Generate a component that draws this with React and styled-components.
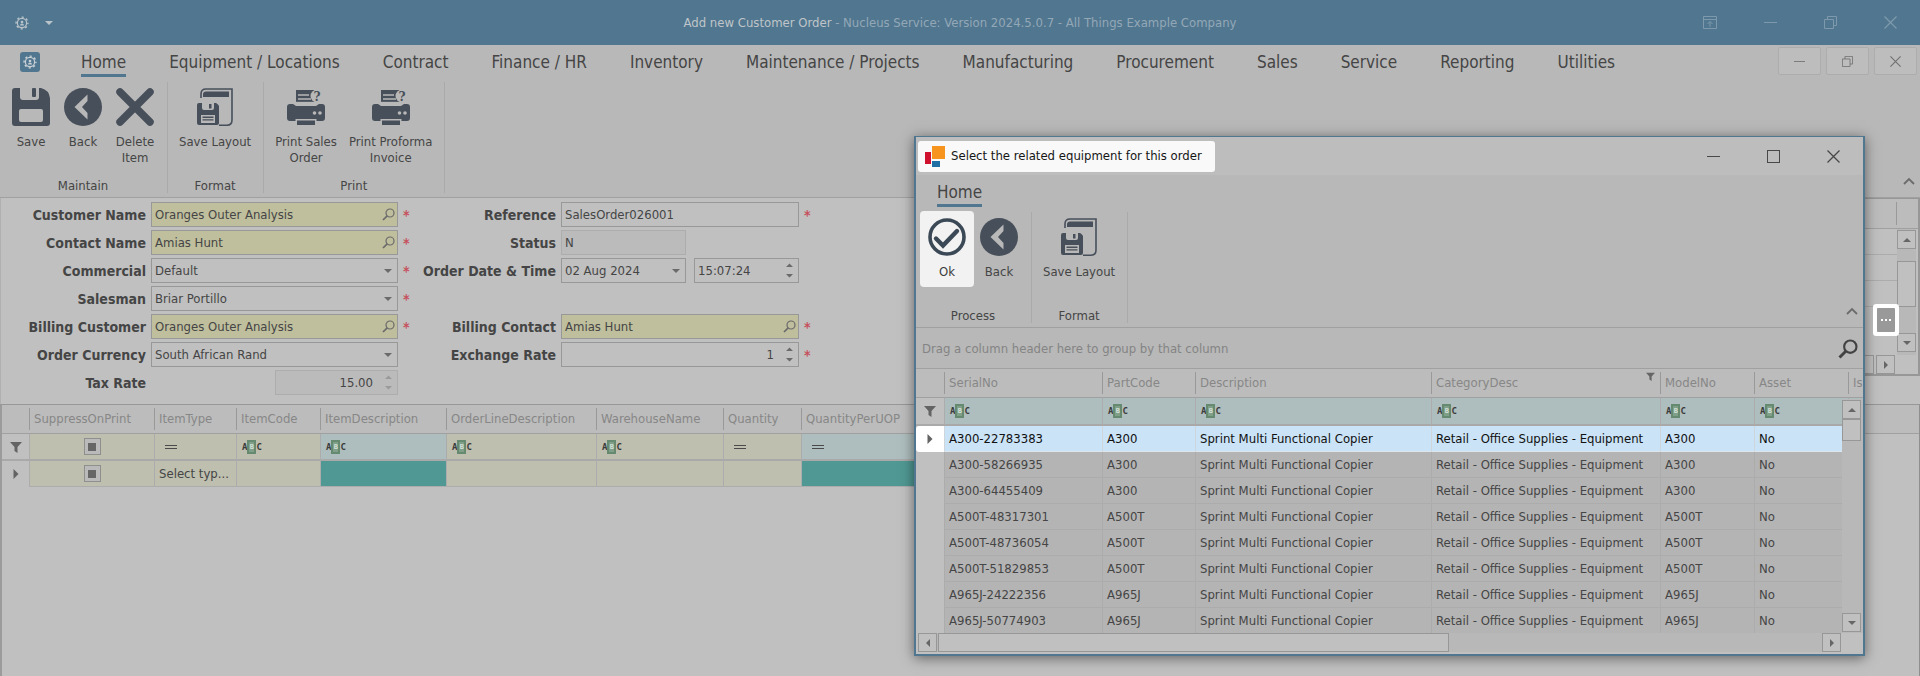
import React, { useState } from 'react';
import styled, { createGlobalStyle, css } from 'styled-components';

const colors = {
  accent: '#51768f',
  chrome: '#b8b8b8',
  panel: '#c0c0c0',
  header: '#bcbcbc',
  line: '#a0a0a0',
  softLine: '#acacac',
  text: '#454545',
  muted: '#878787',
  icon: '#474f5a',
  lookup: '#bfbe9d',
  beige: '#bebfaf',
  paleTeal: '#aebdbd',
  teal: '#509893',
};

const GlobalStyle = createGlobalStyle`
  * {
    box-sizing: border-box;
  }

  body {
    margin: 0;
    background: ${colors.panel};
    color: ${colors.text};
    font-family: "DejaVu Sans Condensed", Tahoma, "DejaVu Sans", sans-serif;
    font-size: 13px;
    line-height: 16px;
  }

  button, input, select {
    font: inherit;
    color: inherit;
    margin: 0;
    padding: 0;
    border: 0;
    background: none;
  }

  svg {
    display: block;
    flex: none;
  }
`;

/* ---------- window ---------- */

const Window = styled.div`
  position: relative;
  display: flex;
  flex-direction: column;
  min-height: 100vh;
  overflow: hidden;
`;

const TitleBar = styled.header`
  display: grid;
  grid-template-columns: 1fr auto 1fr;
  align-items: center;
  height: 45px;
  background: ${colors.accent};
  color: #93a8b7;
`;

const TitleText = styled.h1`
  margin: 0;
  font-size: 13px;
  font-weight: 400;
  white-space: nowrap;

  b {
    font-weight: 400;
    color: #bfc5c9;
  }
`;

const QuickAccess = styled.div`
  display: flex;
  align-items: center;
  gap: 16px;
  padding-left: 15px;
  color: #b9c3ca;
`;

const WindowButtons = styled.div`
  display: flex;
  justify-content: flex-end;
  color: ${({ $color }) => $color};
`;

const WindowButton = styled.button`
  display: flex;
  align-items: center;
  justify-content: center;
  width: 60px;
  height: 36px;
`;

const MdiButtons = styled.div`
  display: flex;
  align-self: flex-start;
  gap: 5px;
  margin: 2px 3px 0 auto;
`;

const MdiButton = styled.button`
  display: flex;
  align-items: center;
  justify-content: center;
  width: 43px;
  height: 28px;
  border: 1px solid #adadad;
  border-radius: 2px;
  background: #bdbdbd;
  color: #707070;
`;

/* ---------- ribbon ---------- */

const Ribbon = styled.div`
  background: ${colors.chrome};
  border-bottom: 1px solid ${colors.line};
`;

const TabRow = styled.nav`
  display: flex;
  align-items: flex-start;
  height: 37px;
`;

const AppBadge = styled.button`
  display: flex;
  align-items: center;
  justify-content: center;
  width: 20px;
  height: 20px;
  margin: 7px 20px 0 20px;
  border-radius: 3px;
  background: ${colors.accent};
  color: #c8d0d6;
`;

const Tab = styled.button`
  height: 32px;
  margin: 0 22px 0 21px;
  padding-top: 4px;
  border-bottom: 3px solid ${({ $active }) => ($active ? colors.accent : 'transparent')};
  font-size: 17px;
  line-height: 24px;
  white-space: nowrap;
`;

const RibbonBody = styled.div`
  display: flex;
  align-items: flex-start;
  padding-bottom: 4px;
`;

const RibbonGroup = styled.section`
  display: flex;
  flex-direction: column;
  justify-content: space-between;
  height: 111px;
  padding: 0 6px 0 5px;
  border-right: 1px solid #aaaaaa;
`;

const GroupButtons = styled.div`
  display: flex;
`;

const GroupName = styled.div`
  line-height: 14px;
  text-align: center;
`;

const RibbonButton = styled.button`
  display: flex;
  flex-direction: column;
  align-items: center;
  gap: 8px;
  min-width: 52px;
  height: 74px;
  padding: 6px 6px 0;
  color: ${colors.text};
  line-height: 16px;
  text-align: center;
  white-space: pre-line;

  ${({ $spot }) =>
    $spot &&
    css`
      border-radius: 3px;
      background: #f2f2f2;
      box-shadow: 0 0 0 1px #f2f2f2;
      color: #3c3c3c;
    `}
`;

const Collapse = styled.button`
  align-self: flex-end;
  margin: 0 5px 3px auto;
  padding: 5px 0;
  color: #6c6c6c;
`;

/* ---------- order form ---------- */

const FormArea = styled.form`
  display: flex;
  background: ${colors.panel};
  border-left: 1px solid #b0b0b0;
`;

const FieldGrid = styled.div`
  display: grid;
  grid-template-columns: ${({ $label }) => $label}px ${({ $field }) => $field}px 10px;
  grid-auto-rows: 25px;
  align-items: center;
  gap: 3px 5px;
  padding: 4px 0 9px;
`;

const FieldLabel = styled.label`
  font-size: 14px;
  font-weight: 700;
  text-align: right;
  white-space: nowrap;
`;

const FieldRow = styled.div`
  display: flex;
  justify-content: ${({ $end }) => ($end ? 'flex-end' : 'flex-start')};
  gap: 8px;
`;

const Star = styled.span`
  color: #c6505c;
  font-size: 14px;
  font-weight: 700;
`;

const Box = styled.div`
  display: flex;
  align-items: center;
  flex: ${({ $width }) => ($width ? `0 0 ${$width}px` : '1')};
  min-width: 0;
  height: 25px;
  padding: 0 ${({ $lookup }) => ($lookup ? 2 : 5)}px 0 3px;
  border: 1px solid ${({ $off }) => ($off ? '#adadad' : '#989898')};
  background: ${({ $lookup, $off }) => ($lookup ? colors.lookup : $off ? '#bbbbbb' : colors.panel)};
  color: ${({ $off }) => ($off ? '#9a9a9a' : '#6a6a6a')};
`;

const controlStyle = css`
  flex: 1;
  min-width: 0;
  height: 23px;
  outline: 0;
  color: ${colors.text};
  text-align: ${({ $right }) => ($right ? 'right' : 'left')};
`;

const Input = styled.input`
  ${controlStyle}
  padding-right: ${({ $right }) => ($right ? 12 : 0)}px;
`;

const Select = styled.select`
  appearance: none;
  ${controlStyle}
`;

/* ---------- grids ---------- */

const Table = styled.table`
  width: ${({ $width }) => $width};
  table-layout: fixed;
  border-collapse: separate;
  border-spacing: 0;
`;

const HeadCell = styled.th`
  height: 29px;
  padding: 0;
  border-bottom: 1px solid ${colors.line};
  background: ${colors.header};
  color: ${colors.muted};
  font-weight: 400;
  text-align: left;
`;

const HeadLabel = styled.div`
  display: flex;
  justify-content: space-between;
  height: 22px;
  padding: 0 5px 0 4px;
  border-left: 1px solid #999999;
  line-height: 22px;
  white-space: nowrap;

  svg {
    color: #666666;
  }
`;

const Cell = styled.td`
  height: 26px;
  padding: 0 0 0 ${({ $pad = 4 }) => $pad}px;
  border-left: 1px solid ${colors.softLine};
  border-bottom: 1px solid ${colors.softLine};
  background: ${({ $bg }) => $bg || '#b4b4b4'};
  text-align: left;
  overflow: hidden;
  white-space: nowrap;
`;

const FilterCell = styled(Cell)`
  height: ${({ $tall }) => ($tall ? 28 : 27)}px;
  border-bottom: 2px solid #a9a9a9;
`;

const MarkerCell = styled.td`
  padding: 0;
  border-bottom: ${({ $line }) => ($line ? '2px solid #a9a9a9' : '0')};
  background: ${colors.panel};
  color: #636363;

  svg {
    margin: 0 auto;
  }
`;

const SelectedRow = styled.tr`
  color: #111111;

  td {
    background: #cae3f6;
    border-left-color: #cfd6db;
    border-bottom-color: #dde6ec;
  }

  td:first-child {
    background: #ffffff;
    border-radius: 3px 0 0 3px;
  }
`;

const Check = styled.input`
  appearance: none;
  display: block;
  width: 17px;
  height: 17px;
  margin: 0 auto;
  border: 1px solid #8f8f8f;
  background: linear-gradient(#666666, #666666) center / 8px 8px no-repeat, #bababa;
`;

const AbcMark = styled.span`
  display: flex;
  align-items: center;
  width: 20px;
  color: #3c3c3c;
  font: 700 9px/14px "DejaVu Sans Mono", monospace;

  i {
    display: flex;
    justify-content: center;
    width: 9px;
    height: 14px;
    border: 2px solid #668a70;
    background: #7f9f88;
    color: #d5e0d8;
    font-style: normal;
    font-size: 7px;
    line-height: 10px;
  }
`;

const LinesGrid = styled.section`
  flex: 1;
  border-top: 1px solid #979797;
  border-left: 2px solid #9b9b9b;
  border-right: 1px solid #8f8f8f;
  background: ${colors.panel};
`;

const LinesHead = styled.div`
  background: linear-gradient(${colors.header} 28px, ${colors.line} 28px, ${colors.line} 29px, transparent 29px);
`;

/* ---------- scroll bars ---------- */

const ScrollTrack = styled.div`
  display: flex;
  flex-direction: ${({ $vertical }) => ($vertical ? 'column' : 'row')};
  gap: ${({ $gap = 0 }) => $gap}px;
  background: ${({ $bg = '#b8b8b8' }) => $bg};
`;

const ScrollButton = styled.button`
  display: flex;
  align-items: center;
  justify-content: center;
  flex: none;
  width: 19px;
  height: 19px;
  border: 1px solid #979797;
  background: ${colors.panel};
  color: #666666;
`;

const Thumb = styled.div`
  flex: 0 0 ${({ $size }) => $size};
  border: 1px solid #979797;
  background: ${colors.panel};
`;

const Spacer = styled.div`
  flex: ${({ $size }) => ($size ? `0 0 ${$size}px` : '1')};
`;

/* ---------- side list, mostly behind the dialog ---------- */

const SideList = styled.div`
  display: flex;
  flex-direction: column;
  flex: 1;
  align-self: flex-start;
  height: 178px;
  margin-left: 186px;
  border: 1px solid #979797;
  border-width: 1px 2px 2px 1px;
`;

const SideHead = styled.div`
  display: flex;
  justify-content: flex-end;
  flex: 0 0 30px;
  padding: 3px 21px 3px 0;
  border-bottom: 1px solid ${colors.line};
  background: ${colors.header};

  &::after {
    content: '';
    border-right: 1px solid #999999;
  }
`;

const SideBody = styled.div`
  display: flex;
  flex: 1;
  padding-right: 2px;
`;

const SideRows = styled.div`
  flex: 1;
`;

const SideRow = styled.div`
  display: flex;
  justify-content: flex-end;
  height: 26px;
  padding: 1px 2px 0 0;
  border-bottom: 1px solid ${({ $last }) => ($last ? 'transparent' : colors.softLine)};
`;

const DotsButton = styled.button`
  position: relative;
  z-index: 1;
  display: flex;
  align-items: center;
  justify-content: center;
  gap: 2px;
  width: 18px;
  height: 24px;
  background: #999999;
  box-shadow: 0 0 0 4px #ffffff;
  border-radius: 1px;

  i {
    width: 2px;
    height: 2px;
    background: #ffffff;
  }
`;

/* ---------- dialog ---------- */

const Dialog = styled.div`
  position: absolute;
  top: 136px;
  right: 55px;
  width: 951px;
  border: 2px solid ${colors.accent};
  border-width: 1px 2px 2px 2px;
  background: ${colors.chrome};
  box-shadow: 0 2px 12px rgba(0, 0, 0, 0.5);
`;

const DialogTitleBar = styled.header`
  display: flex;
  align-items: center;
  height: 38px;
  background: #bdbdbd;
`;

const DialogTitle = styled.h2`
  display: flex;
  align-items: center;
  gap: 5px;
  height: 31px;
  margin: 0 auto 0 2px;
  padding: 0 13px 0 7px;
  border-radius: 3px;
  background: #f9f9f9;
  color: #161616;
  font-size: 13px;
  font-weight: 400;
`;

const GroupPanel = styled.div`
  display: flex;
  align-items: center;
  justify-content: space-between;
  height: 41px;
  padding: 2px 5px 0 6px;
  border-bottom: 1px solid ${colors.line};
  color: #848484;
`;

const SearchButton = styled.button`
  color: #424242;
`;

const DialogGrid = styled.div`
  position: relative;
  height: 264px;
  overflow: hidden;
`;

const GridScroll = styled.div`
  position: absolute;
  top: 30px;
  right: 0;
  bottom: 0;
  display: flex;
  width: 21px;
  padding: 1px 2px 1px 0;
  background: ${colors.chrome};
`;

const DialogFooter = styled.div`
  display: flex;
  align-items: center;
  padding: 0 0 2px 2px;
  background: ${colors.panel};
`;

const FooterTrack = styled(ScrollTrack)`
  flex: 1;
  margin-right: 22px;
`;

/* ---------- icons ---------- */

const GearIcon = () => (
  <svg width="14" height="14" viewBox="0 0 14 14" fill="none" stroke="currentColor">
    <circle cx="7" cy="7" r="4.6" strokeWidth="1.2" />
    <circle cx="7" cy="7" r="5.9" strokeWidth="1.4" strokeDasharray="2.2 2.434" strokeDashoffset="1.1" />
    <circle cx="7" cy="6" r="1.300" fill="currentColor" stroke="none" />
    <path d="M5 9.500Q5 7.500 7 7.500Q9 7.500 9 9.500Z" fill="currentColor" stroke="none" />
  </svg>
);

const SaveIcon = () => (
  <svg width="38" height="38" viewBox="0 0 38 38" fill={colors.icon}>
    <path
      fillRule="evenodd"
      d="M3 0H8V9Q8 12 11 12H24Q27 12 27 9V0H29Q37 2 38 10V35Q38 38 35 38H3Q0 38 0 35V3Q0 0 3 0ZM9 21Q7 21 7 23V32Q7 34 9 34H29Q31 34 31 32V23Q31 21 29 21Z"
    />
    <rect x="20" y="0" width="4" height="9" rx="1" />
  </svg>
);

const BackIcon = () => (
  <svg width="38" height="38" viewBox="0 0 38 38">
    <circle cx="19" cy="19" r="19" fill={colors.icon} />
    <path d="M23.5 6.5L10.5 19L23.5 31.5V25L18 19L23.5 13Z" fill={colors.chrome} />
  </svg>
);

const DeleteIcon = () => (
  <svg width="38" height="38" viewBox="0 0 38 38">
    <path d="M4 4L34 34M34 4L4 34" stroke={colors.icon} strokeWidth="7.500" strokeLinecap="round" />
  </svg>
);

const LayoutIcon = () => (
  <svg width="38" height="38" viewBox="0 0 38 38" fill={colors.icon}>
    <path d="M5 10V6Q5 1 10 1H36V32Q36 37.2 31 37.2H23" fill="none" stroke={colors.icon} strokeWidth="1.6" />
    <path d="M10 3.5H33V9H7V6.500Q7 3.500 10 3.500Z" />
    <path
      fillRule="evenodd"
      d="M3 15H6V20Q6 22 8 22H16Q18 22 18 20V15H20Q22 16 23 18V35Q23 37 21 37H3Q1 37 1 35V17Q1 15 3 15ZM5 27V35H19V27Z"
    />
    <path d="M13 16H15.500V20.500H13ZM6.500 28.500H17.500V30H6.500ZM6.500 31.300H17.500V32.600H6.500Z" />
  </svg>
);

const PrintIcon = () => (
  <svg width="38" height="38" viewBox="0 0 38 38" fill={colors.icon}>
    <path d="M9 2H30V15H9Z" />
    <path d="M11 7H22M11 11H24" stroke={colors.chrome} strokeWidth="1.3" />
    <path d="M8 14.500H30" stroke={colors.chrome} strokeWidth="1.3" />
    <path d="M3 16H6L9 18H29L32 16H35Q38 16 38 19V30Q38 33 35 33H3Q0 33 0 30V19Q0 16 3 16Z" />
    <circle cx="30" cy="8" r="6.500" fill={colors.chrome} />
    <circle cx="27.500" cy="25" r="1.800" fill={colors.chrome} />
    <circle cx="33" cy="25" r="1.800" fill={colors.chrome} />
    <path d="M8.500 31H29.500V36H8.500Z" fill={colors.chrome} />
    <rect x="10" y="32.500" width="18" height="4.500" />
    <text x="30" y="13" textAnchor="middle" fontFamily="DejaVu Serif" fontSize="12" fontWeight="700">
      ?
    </text>
  </svg>
);

const OkIcon = () => (
  <svg width="38" height="38" viewBox="0 0 38 38" fill="none" stroke="#3b4856">
    <circle cx="19" cy="19" r="17" strokeWidth="3.600" />
    <path d="M8 20.500L15 27.500L29 13" strokeWidth="4.400" strokeLinecap="round" />
  </svg>
);

const CompanyIcon = () => (
  <svg width="21" height="21" viewBox="0 0 21 21">
    <rect x="0" y="6" width="6" height="12" fill="#d0112e" />
    <rect x="7" y="0" width="13" height="13" fill="#f7941e" />
    <rect x="7" y="15" width="8" height="6" fill="#1f6fa5" />
  </svg>
);

const MinimizeIcon = ({ size = 13 }) => (
  <svg width={size} height={size} viewBox="0 0 13 13">
    <path d="M0 6.500H13" stroke="currentColor" strokeWidth="1" />
  </svg>
);

const MaximizeIcon = () => (
  <svg width="13" height="13" viewBox="0 0 13 13">
    <rect x="0.500" y="0.500" width="12" height="12" fill="none" stroke="currentColor" />
  </svg>
);

const RestoreIcon = ({ size = 13 }) => (
  <svg width={size} height={size} viewBox="0 0 13 13" fill="none" stroke="currentColor">
    <path d="M0.500 3.500H9.500V12.500H0.500ZM3.500 3.500V0.500H12.500V9.500H9.500" />
  </svg>
);

const CloseIcon = ({ size = 13 }) => (
  <svg width={size} height={size} viewBox="0 0 13 13">
    <path d="M0.500 0.500L12.500 12.500M12.500 0.500L0.500 12.500" stroke="currentColor" strokeWidth="1.300" />
  </svg>
);

const RibbonToggleIcon = () => (
  <svg width="14" height="13" viewBox="0 0 14 13" fill="none" stroke="currentColor">
    <path d="M0.500 0.500H13.500V12.500H0.500ZM0.500 3.500H13.500M7 11V5.500M4.500 8L7 5.500L9.500 8" />
  </svg>
);

const ChevronUp = () => (
  <svg width="12" height="8" viewBox="0 0 12 8">
    <path d="M1 7L6 2L11 7" fill="none" stroke="currentColor" strokeWidth="1.800" />
  </svg>
);

const MagnifierIcon = ({ size = 13, weight = 1.2 }) => (
  <svg width={size} height={size} viewBox="0 0 13 13" fill="none" stroke="currentColor">
    <circle cx="8" cy="5" r="4" strokeWidth={weight} />
    <path d="M5.200 7.800L1 12" strokeWidth={weight * 1.4} />
  </svg>
);

const FunnelIcon = ({ size = 12 }) => (
  <svg width={size} height={size} viewBox="0 0 12 12">
    <path d="M0 1H12L7.500 6V12L4.500 10V6Z" fill="currentColor" />
  </svg>
);

const EqualsIcon = () => (
  <svg width="12" height="6" viewBox="0 0 12 6">
    <path d="M0 1.500H12M0 4.500H12" stroke="#4a4a4a" strokeWidth="1.200" />
  </svg>
);

const triangles = {
  up: 'M0 6L4 2L8 6Z',
  down: 'M0 2L4 6L8 2Z',
  left: 'M6 0L2 4L6 8Z',
  right: 'M2 0L6 4L2 8Z',
};

const Triangle = ({ dir, size = 8 }) => (
  <svg width={size} height={size} viewBox="0 0 8 8">
    <path d={triangles[dir]} fill="currentColor" />
  </svg>
);

const SpinIcon = () => (
  <svg width="7" height="15" viewBox="0 0 7 15" fill="currentColor">
    <path d="M0 4L3.500 0.500L7 4ZM0 11L3.500 14.500L7 11Z" />
  </svg>
);

/* ---------- data ---------- */

const tabs = [
  'Home',
  'Equipment / Locations',
  'Contract',
  'Finance / HR',
  'Inventory',
  'Maintenance / Projects',
  'Manufacturing',
  'Procurement',
  'Sales',
  'Service',
  'Reporting',
  'Utilities',
];

const mainGroups = [
  {
    name: 'Maintain',
    buttons: [
      { label: 'Save', Icon: SaveIcon },
      { label: 'Back', Icon: BackIcon },
      { label: 'Delete\nItem', Icon: DeleteIcon },
    ],
  },
  { name: 'Format', buttons: [{ label: 'Save Layout', Icon: LayoutIcon }] },
  {
    name: 'Print',
    buttons: [
      { label: 'Print Sales\nOrder', Icon: PrintIcon },
      { label: 'Print Proforma\nInvoice', Icon: PrintIcon },
    ],
  },
];

const dialogGroups = [
  {
    name: 'Process',
    buttons: [
      { label: 'Ok', Icon: OkIcon, spot: true },
      { label: 'Back', Icon: BackIcon },
    ],
  },
  { name: 'Format', buttons: [{ label: 'Save Layout', Icon: LayoutIcon }] },
];

const leftFields = [
  { id: 'customer', label: 'Customer Name', type: 'lookup', value: 'Oranges Outer Analysis', required: true },
  { id: 'contact', label: 'Contact Name', type: 'lookup', value: 'Amias Hunt', required: true },
  { id: 'commercial', label: 'Commercial', type: 'select', value: 'Default', required: true },
  { id: 'salesman', label: 'Salesman', type: 'select', value: 'Briar Portillo', required: true },
  { id: 'billing', label: 'Billing Customer', type: 'lookup', value: 'Oranges Outer Analysis', required: true },
  { id: 'currency', label: 'Order Currency', type: 'select', value: 'South African Rand' },
  { id: 'tax', label: 'Tax Rate', type: 'spin', value: '15.00', width: 123, right: true, off: true },
];

const rightFields = [
  { id: 'reference', label: 'Reference', type: 'text', value: 'SalesOrder026001', required: true },
  { id: 'status', label: 'Status', type: 'text', value: 'N', width: 125, off: true },
  { id: 'date', label: 'Order Date & Time', type: 'select', value: '02 Aug 2024', width: 125, time: '15:07:24' },
  { id: 'blank' },
  { id: 'billingContact', label: 'Billing Contact', type: 'lookup', value: 'Amias Hunt', required: true },
  { id: 'rate', label: 'Exchange Rate', type: 'spin', value: '1', right: true, required: true },
];

const lineColumns = [
  { name: 'SuppressOnPrint', width: 125, filter: 'check' },
  { name: 'ItemType', width: 82, filter: 'equals' },
  { name: 'ItemCode', width: 84, filter: 'abc' },
  { name: 'ItemDescription', width: 126, filter: 'abc', locked: true },
  { name: 'OrderLineDescription', width: 150, filter: 'abc' },
  { name: 'WarehouseName', width: 127, filter: 'abc' },
  { name: 'Quantity', width: 78, filter: 'equals' },
  { name: 'QuantityPerUOP', width: 131, filter: 'equals', locked: true },
];

const pickColumns = [
  { name: 'SerialNo', width: 158 },
  { name: 'PartCode', width: 93 },
  { name: 'Description', width: 236 },
  { name: 'CategoryDesc', width: 229, filtered: true },
  { name: 'ModelNo', width: 94 },
  { name: 'Asset', width: 94 },
  { name: 'Is' },
];

const serials = [
  ['A300-22783383', 'A300'],
  ['A300-58266935', 'A300'],
  ['A300-64455409', 'A300'],
  ['A500T-48317301', 'A500T'],
  ['A500T-48736054', 'A500T'],
  ['A500T-51829853', 'A500T'],
  ['A965J-24222356', 'A965J'],
  ['A965J-50774903', 'A965J'],
];

/* ---------- components ---------- */

const RibbonGroups = ({ groups }) => (
  <RibbonBody>
    {groups.map((group) => (
      <RibbonGroup key={group.name}>
        <GroupButtons>
          {group.buttons.map(({ label, Icon, spot }) => (
            <RibbonButton key={label} type="button" $spot={spot}>
              <Icon />
              {label}
            </RibbonButton>
          ))}
        </GroupButtons>
        <GroupName>{group.name}</GroupName>
      </RibbonGroup>
    ))}
    <Collapse type="button" aria-label="Collapse ribbon">
      <ChevronUp />
    </Collapse>
  </RibbonBody>
);

const Control = ({ id, type, value, width, right, off }) => (
  <Box $width={width} $lookup={type === 'lookup'} $off={off}>
    {type === 'select' ? (
      <Select id={id} defaultValue={value}>
        <option>{value}</option>
      </Select>
    ) : (
      <Input id={id} type="text" defaultValue={value} readOnly={off} $right={right} />
    )}
    {type === 'lookup' && <MagnifierIcon />}
    {type === 'select' && <Triangle dir="down" size={8} />}
    {type === 'spin' && <SpinIcon />}
  </Box>
);

const Fields = ({ fields, label, field }) => (
  <FieldGrid $label={label} $field={field}>
    {fields.map((f) =>
      f.label ? (
        <React.Fragment key={f.id}>
          <FieldLabel htmlFor={f.id}>{f.label}</FieldLabel>
          <FieldRow $end={f.right}>
            <Control {...f} />
            {f.time && <Control id="time" type="spin" value={f.time} />}
          </FieldRow>
          <Star>{f.required ? '*' : ''}</Star>
        </React.Fragment>
      ) : (
        <React.Fragment key={f.id}>
          <span />
          <span />
          <span />
        </React.Fragment>
      )
    )}
  </FieldGrid>
);

const Abc = () => (
  <AbcMark>
    A<i>B</i>C
  </AbcMark>
);

const OrderLines = () => (
  <LinesGrid>
    <LinesHead>
      <Table $width="930px">
        <colgroup>
          <col width="27" />
          {lineColumns.map((c) => (
            <col key={c.name} width={c.width} />
          ))}
        </colgroup>
        <thead>
          <tr>
            <HeadCell />
            {lineColumns.map((c) => (
              <HeadCell key={c.name} scope="col">
                <HeadLabel>{c.name}</HeadLabel>
              </HeadCell>
            ))}
          </tr>
        </thead>
        <tbody>
          <tr>
            <MarkerCell $line>
              <FunnelIcon />
            </MarkerCell>
            {lineColumns.map((c) => (
              <FilterCell
                key={c.name}
                $bg={c.locked ? colors.paleTeal : colors.beige}
                $pad={c.filter === 'check' ? 0 : c.filter === 'equals' ? 10 : 5}
              >
                {c.filter === 'check' && <Check type="checkbox" aria-label="Filter SuppressOnPrint" />}
                {c.filter === 'equals' && <EqualsIcon />}
                {c.filter === 'abc' && <Abc />}
              </FilterCell>
            ))}
          </tr>
          <tr>
            <MarkerCell>
              <Triangle dir="right" size={10} />
            </MarkerCell>
            {lineColumns.map((c) => (
              <Cell key={c.name} $bg={c.locked ? colors.teal : colors.beige} $pad={c.filter === 'check' ? 0 : 4}>
                {c.filter === 'check' && <Check type="checkbox" aria-label="SuppressOnPrint" />}
                {c.name === 'ItemType' && 'Select typ...'}
              </Cell>
            ))}
          </tr>
        </tbody>
      </Table>
    </LinesHead>
  </LinesGrid>
);

const EquipmentDialog = () => {
  const [selected, setSelected] = useState(0);

  return (
    <Dialog role="dialog" aria-labelledby="dialog-title">
      <DialogTitleBar>
        <DialogTitle id="dialog-title">
          <CompanyIcon />
          Select the related equipment for this order
        </DialogTitle>
        <WindowButtons $color="#484848">
          <WindowButton aria-label="Minimize"><MinimizeIcon /></WindowButton>
          <WindowButton aria-label="Maximize"><MaximizeIcon /></WindowButton>
          <WindowButton aria-label="Close"><CloseIcon /></WindowButton>
        </WindowButtons>
      </DialogTitleBar>
      <Ribbon>
        <TabRow>
          <Tab $active>Home</Tab>
        </TabRow>
        <RibbonGroups groups={dialogGroups} />
      </Ribbon>
      <GroupPanel>
        Drag a column header here to group by that column
        <SearchButton aria-label="Search">
          <MagnifierIcon size={20} weight={1.4} />
        </SearchButton>
      </GroupPanel>
      <DialogGrid>
        <Table $width="100%">
          <colgroup>
            <col width="28" />
            {pickColumns.map((c) => (
              <col key={c.name} width={c.width} />
            ))}
          </colgroup>
          <thead>
            <tr>
              <HeadCell />
              {pickColumns.map((c) => (
                <HeadCell key={c.name} scope="col">
                  <HeadLabel>
                    {c.name}
                    {c.filtered && <FunnelIcon size={9} />}
                  </HeadLabel>
                </HeadCell>
              ))}
            </tr>
          </thead>
          <tbody>
            <tr>
              <MarkerCell $line>
                <FunnelIcon />
              </MarkerCell>
              {pickColumns.map((c) => (
                <FilterCell key={c.name} $tall $bg={colors.paleTeal} $pad={5}>
                  {c.width && <Abc />}
                </FilterCell>
              ))}
            </tr>
            {serials.map(([serial, model], i) => {
              const Row = i === selected ? SelectedRow : 'tr';
              return (
                <Row key={serial} onClick={() => setSelected(i)}>
                  <MarkerCell>{i === selected && <Triangle dir="right" size={10} />}</MarkerCell>
                  <Cell>{serial}</Cell>
                  <Cell>{model}</Cell>
                  <Cell>Sprint Multi Functional Copier</Cell>
                  <Cell>Retail - Office Supplies - Equipment</Cell>
                  <Cell>{model}</Cell>
                  <Cell>No</Cell>
                  <Cell />
                </Row>
              );
            })}
          </tbody>
        </Table>
        <GridScroll>
          <ScrollTrack $vertical>
            <ScrollButton aria-label="Scroll up"><Triangle dir="up" /></ScrollButton>
            <Thumb $size="22px" />
            <Spacer />
            <ScrollButton aria-label="Scroll down"><Triangle dir="down" /></ScrollButton>
          </ScrollTrack>
        </GridScroll>
      </DialogGrid>
      <DialogFooter>
        <FooterTrack $gap={1}>
          <ScrollButton aria-label="Scroll left"><Triangle dir="left" /></ScrollButton>
          <Thumb $size="511px" />
          <Spacer />
          <ScrollButton aria-label="Scroll right"><Triangle dir="right" /></ScrollButton>
        </FooterTrack>
      </DialogFooter>
    </Dialog>
  );
};

const RelatedList = () => (
  <SideList>
    <SideHead />
    <SideBody>
      <SideRows>
        <SideRow />
        <SideRow />
        <SideRow />
        <SideRow $last>
          <DotsButton type="button" aria-label="Select equipment">
            <i />
            <i />
            <i />
          </DotsButton>
        </SideRow>
      </SideRows>
      <ScrollTrack $vertical>
        <Spacer $size={1} />
        <ScrollButton type="button" aria-label="Scroll up"><Triangle dir="up" /></ScrollButton>
        <Spacer $size={12} />
        <Thumb $size="46px" />
        <Spacer />
        <ScrollButton type="button" aria-label="Scroll down"><Triangle dir="down" /></ScrollButton>
        <Spacer $size={3} />
      </ScrollTrack>
    </SideBody>
    <ScrollTrack $gap={2} $bg={colors.panel}>
      <Thumb $size="calc(100% - 44px)" />
      <ScrollButton type="button" aria-label="Scroll right"><Triangle dir="right" /></ScrollButton>
    </ScrollTrack>
  </SideList>
);

function App() {
  const [activeTab, setActiveTab] = useState('Home');

  return (
    <Window>
      <GlobalStyle />
      <TitleBar>
        <QuickAccess>
          <GearIcon />
          <Triangle dir="down" size={8} />
        </QuickAccess>
        <TitleText>
          <b>Add new Customer Order</b> - Nucleus Service: Version 2024.5.0.7 - All Things Example Company
        </TitleText>
        <WindowButtons $color="#7d99ab">
          <WindowButton aria-label="Ribbon display"><RibbonToggleIcon /></WindowButton>
          <WindowButton aria-label="Minimize"><MinimizeIcon /></WindowButton>
          <WindowButton aria-label="Restore"><RestoreIcon /></WindowButton>
          <WindowButton aria-label="Close"><CloseIcon /></WindowButton>
        </WindowButtons>
      </TitleBar>

      <Ribbon>
        <TabRow>
          <AppBadge aria-label="Application menu">
            <GearIcon />
          </AppBadge>
          {tabs.map((tab) => (
            <Tab key={tab} $active={tab === activeTab} onClick={() => setActiveTab(tab)}>
              {tab}
            </Tab>
          ))}
          <MdiButtons>
            <MdiButton aria-label="Minimize order"><MinimizeIcon size={11} /></MdiButton>
            <MdiButton aria-label="Restore order"><RestoreIcon size={11} /></MdiButton>
            <MdiButton aria-label="Close order"><CloseIcon size={11} /></MdiButton>
          </MdiButtons>
        </TabRow>
        <RibbonGroups groups={mainGroups} />
      </Ribbon>

      <FormArea>
        <Fields fields={leftFields} label={145} field={247} />
        <Fields fields={rightFields} label={143} field={238} />
        <RelatedList />
      </FormArea>

      <OrderLines />
      <EquipmentDialog />
    </Window>
  );
}

export default App;
